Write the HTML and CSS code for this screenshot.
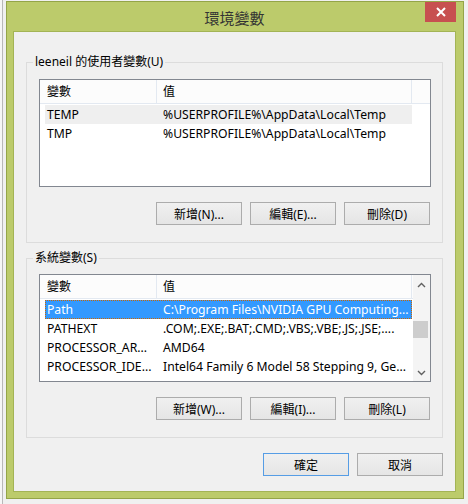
FILE: index.html
```html
<!DOCTYPE html>
<html lang="zh-Hant">
<head>
<meta charset="utf-8">
<title>環境變數</title>
<link rel="stylesheet" href="styles.css">
</head>
<body>
<div class="window">
  <div class="titlebar">
    <span></span>
    <div class="title">環境變數</div>
    <button class="close" aria-label="關閉">
      <svg width="10" height="10" viewBox="0 0 10 10"><path d="M1 1L9 9M9 1L1 9" stroke="#fff" stroke-width="2" fill="none"/></svg>
    </button>
  </div>
  <div class="client">
    <section class="group">
      <div class="group-label">leeneil 的使用者變數(U)</div>
      <div class="list">
        <div class="list-main">
          <div class="list-head">
            <div class="hcell c1">變數</div>
            <div class="hcell c2">值</div>
          </div>
          <div class="rows">
            <div class="row inactive"><div class="cell c1">TEMP</div><div class="cell c2">%USERPROFILE%\AppData\Local\Temp</div></div>
            <div class="row"><div class="cell c1">TMP</div><div class="cell c2">%USERPROFILE%\AppData\Local\Temp</div></div>
          </div>
        </div>
      </div>
      <div class="btnrow">
        <button class="btn">新增(N)...</button>
        <button class="btn">編輯(E)...</button>
        <button class="btn">刪除(D)</button>
      </div>
    </section>
    <section class="group">
      <div class="group-label">系統變數(S)</div>
      <div class="list list-sys">
        <div class="list-main">
          <div class="list-head">
            <div class="hcell c1">變數</div>
            <div class="hcell c2">值</div>
          </div>
          <div class="rows">
            <div class="row selected"><div class="cell c1">Path</div><div class="cell c2">C:\Program Files\NVIDIA GPU Computing...</div></div>
            <div class="row"><div class="cell c1">PATHEXT</div><div class="cell c2">.COM;.EXE;.BAT;.CMD;.VBS;.VBE;.JS;.JSE;....</div></div>
            <div class="row"><div class="cell c1">PROCESSOR_AR...</div><div class="cell c2">AMD64</div></div>
            <div class="row"><div class="cell c1">PROCESSOR_IDE...</div><div class="cell c2">Intel64 Family 6 Model 58 Stepping 9, Ge...</div></div>
          </div>
        </div>
        <div class="vscroll">
          <div class="arrow up"><svg width="9" height="6" viewBox="0 0 9 6"><path d="M1 5L4.5 1.5L8 5" stroke="#606060" stroke-width="1.4" fill="none"/></svg></div>
          <div class="track"><div class="thumb"></div></div>
          <div class="arrow down"><svg width="9" height="6" viewBox="0 0 9 6"><path d="M1 1L4.5 4.5L8 1" stroke="#606060" stroke-width="1.4" fill="none"/></svg></div>
        </div>
      </div>
      <div class="btnrow">
        <button class="btn">新增(W)...</button>
        <button class="btn">編輯(I)...</button>
        <button class="btn">刪除(L)</button>
      </div>
    </section>
    <div class="btnrow dialog-btns">
      <button class="btn default">確定</button>
      <button class="btn">取消</button>
    </div>
  </div>
</div>
</body>
</html>
```
FILE: styles.css
```css
* { box-sizing: border-box; }

html, body { margin: 0; }

body {
  width: 468px;
  height: 504px;
  overflow: hidden;
  padding: 1px 0 0 6px;
  background:
    linear-gradient(to right, #f6f6f6 0 2px, #b8b8b8 2px 3px, #f0f0f0 3px 100%);
  font-family: "Noto Sans", "Noto Sans CJK TC", sans-serif;
  font-size: 12px;
  color: #000;
}

.window {
  width: 458px;
  height: 498px;
  border: 1px solid #94a548;
  background: #bccb6b;
  padding: 0 7px 6px 6px;
  display: flex;
  flex-direction: column;
}

.titlebar {
  height: 29px;
  flex: none;
  display: grid;
  grid-template-columns: 1fr auto 1fr;
}

.title {
  align-self: center;
  font-family: "Noto Sans CJK TC", sans-serif;
  font-size: 15px;
  line-height: 20px;
  padding-top: 2px;
  color: #333;
}

.close {
  justify-self: end;
  align-self: start;
  width: 31px;
  height: 20px;
  border: 0;
  padding: 0;
  background: #c75050;
  display: flex;
  align-items: center;
  justify-content: center;
}

.client {
  height: 461px;
  border: 1px solid #a3b455;
  background: #f0f0f0;
  padding: 30px 12px 0 12px;
}

.group {
  border: 1px solid #dcdcdc;
  padding: 0 12px 17px 12px;
  display: flex;
  flex-direction: column;
}

.group + .group { margin-top: 15px; }

.group-label {
  align-self: flex-start;
  margin: -9px 0 0 -6px;
  padding: 0 2px;
  height: 16px;
  line-height: 16px;
  background: #f0f0f0;
  white-space: nowrap;
}

.list {
  margin-top: 9px;
  width: 392px;
  height: 108px;
  border: 1px solid #828790;
  background: #fff;
  display: flex;
}

.list-sys { margin-top: 8px; }

.list-main {
  flex: 1;
  min-width: 0;
  display: flex;
  flex-direction: column;
}

.list-head {
  flex: none;
  display: flex;
  height: 24px;
  border-bottom: 1px solid #e3e9f1;
  background: #fcfcfc;
}

.hcell {
  line-height: 23px;
  border-right: 1px solid #e3e9f1;
  white-space: nowrap;
}

.hcell.c1 { width: 117px; padding-left: 7px; }
.hcell.c2 { width: 255px; padding-left: 6px; }

.rows { padding: 1px 0 0 5px; }

.row {
  display: flex;
  width: 367px;
  height: 19px;
  line-height: 19px;
  font-size: 12.2px;
}

.cell {
  white-space: nowrap;
  overflow: hidden;
}

.row .c1 { width: 112px; padding-left: 2px; }
.row .c2 { width: 255px; padding-left: 6px; }

.row.inactive { background: #efefef; }

.row.selected {
  background: #3399ff;
  color: #fff;
  outline: 1px dotted #cc6600;
  outline-offset: -1px;
}

.vscroll {
  flex: none;
  width: 17px;
  background: #f4f4f4;
  display: flex;
  flex-direction: column;
}

.arrow {
  height: 17px;
  flex: none;
  display: flex;
  justify-content: center;
  align-items: center;
}

.arrow.up { padding-top: 3px; }

.track { flex: 1; }

.thumb {
  width: 15px;
  height: 17px;
  margin-top: 29px;
  background: #cdcdcd;
}

.btnrow {
  display: flex;
  justify-content: flex-end;
  gap: 8px;
  margin-top: 15px;
}

.btn {
  width: 86px;
  height: 23px;
  padding: 0;
  border: 1px solid #acacac;
  background: linear-gradient(#f0f0f0, #e5e5e5);
  font-family: "Noto Sans", "Noto Sans CJK TC", sans-serif;
  font-size: 12px;
  color: #000;
}

.btn.default { border-color: #569de5; }

.dialog-btns { margin-top: 15px; }
```
